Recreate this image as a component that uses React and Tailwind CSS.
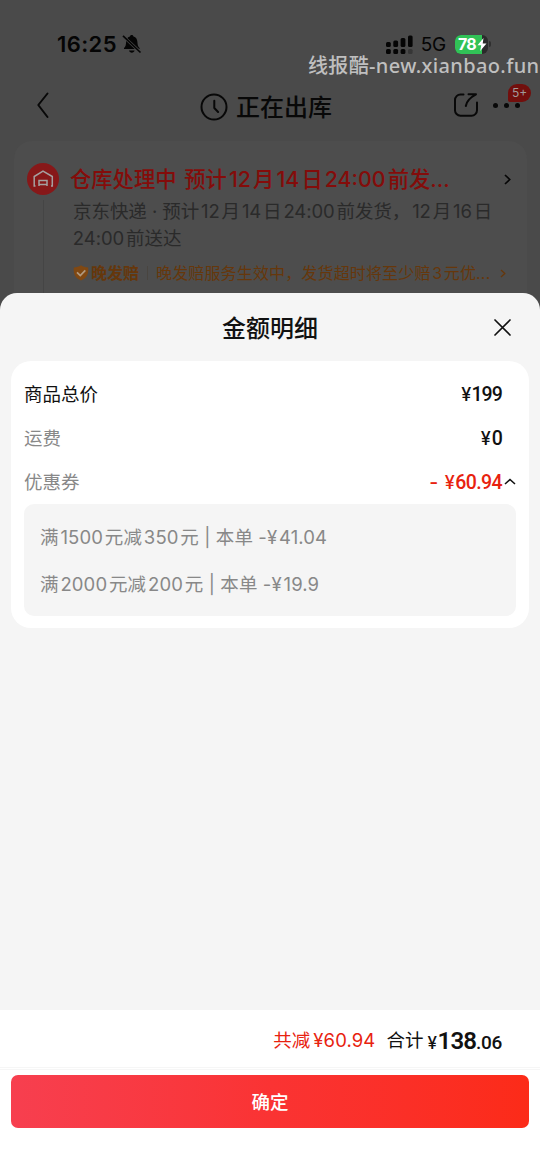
import React from "react";

const coupons = ["满1500元减350元 | 本单 -¥41.04", "满2000元减200元 | 本单 -¥19.9"];

// adds a small gap between chinese characters and numbers
function Mixed({ text }) {
  return text.split(/(\d[\d:.]*)/).map((part, i) =>
    i % 2 ? (
      <span key={i} className="mx-[0.1em]">
        {part}
      </span>
    ) : (
      part
    )
  );
}

function StatusBar() {
  return (
    <div className="flex h-[88px] shrink-0 items-center pl-[57px] pr-[49px] text-[#050505]">
      <span className="text-[22px] font-semibold tracking-[0.4px]">16:25</span>
      <svg className="ml-[5px] h-5 w-5" viewBox="0 0 20 20">
        <path
          d="M9.7 1c1 0 1.700.7 1.800 1.500 2.700.8 3.800 3 3.900 5.500.1 3 .7 4.700 2.200 6v1.100H2V14c1.500-1.300 2-3 2.100-6 .1-2.500 1.200-4.700 3.800-5.500C8 1.700 8.700 1 9.700 1zM7 16.500h5.600c-.4 1.400-1.400 2.200-2.800 2.200S7.400 17.900 7 16.500z"
          fill="currentColor"
        />
        <path d="M1.500 2.500L18.200 18.200" stroke="#4a4a4a" strokeWidth="3" />
        <path d="M1 1.800L18.500 18.500" stroke="currentColor" strokeWidth="1.600" />
      </svg>

      <svg className="ml-auto h-[19px] w-[27px]" viewBox="0 0 27 19" fill="currentColor">
        <rect x="0" y="7" width="4.800" height="5" rx="1.500" />
        <rect x="7.300" y="5.500" width="4.800" height="6.500" rx="1.500" />
        <rect x="14.600" y="3" width="4.800" height="9" rx="1.500" />
        <rect x="22" y="0.500" width="4.600" height="11.500" rx="1.500" />
        <rect x="0" y="14" width="4.800" height="5" rx="1.500" />
        <rect x="7.300" y="14" width="4.800" height="5" rx="1.500" />
        <rect x="14.600" y="14" width="4.800" height="5" rx="1.500" />
        <rect x="22" y="14" width="4.600" height="5" rx="1.500" fill="#363636" />
      </svg>
      <span className="ml-2 text-[19px] leading-none tracking-[-0.2px]">5G</span>
      <div className="relative ml-[9px] flex h-[19px] w-[33px] items-center overflow-hidden rounded-md bg-[#2b2b2b]">
        <div className="absolute inset-y-0 left-0 w-[27px] bg-[#31c257]" />
        <span className="relative ml-[3px] text-[16px] font-bold leading-none tracking-[-0.8px] text-white">78</span>
        <svg className="absolute right-[1px] top-[3px] h-[13px] w-[10px]" viewBox="0 0 10 13">
          <path d="M6.500 0L.5 7.300h3.700L3.200 13 9.500 5.500H5.700z" fill="#fff" />
        </svg>
      </div>
      <div className="ml-[1px] h-1.5 w-[2px] rounded-r bg-[#2f2f2f]" />
    </div>
  );
}

function NavBar() {
  return (
    <div className="relative flex h-[34px] shrink-0 items-center justify-between pl-[35px] pr-[11px] text-[#080808]">
      <svg className="h-7 w-4" viewBox="0 0 16 28" fill="none" stroke="currentColor" strokeWidth="2">
        <path d="M12.500 2.500L3.300 14 12.500 26" strokeLinecap="round" strokeLinejoin="round" />
      </svg>
      <div className="absolute left-[200px] top-0 flex h-[34px] items-center">
        <svg className="mt-[3px] h-7 w-7" viewBox="0 0 28 28" fill="none" stroke="currentColor" strokeWidth="2">
          <circle cx="14" cy="14" r="12.500" />
          <path d="M14.300 7.800v7.200l3.800 4" strokeLinecap="round" strokeLinejoin="round" />
        </svg>
        <span className="ml-2 mt-[5px] text-2xl font-medium">正在出库</span>
      </div>
      <div className="flex items-center">
        <svg className="h-6 w-6" viewBox="0 0 24 24" fill="none" stroke="currentColor" strokeWidth="2">
          <path
            d="M9.500 1.500H6.500a5.500 5.500 0 0 0-5.500 5.500v10A5.500 5.500 0 0 0 6.500 22.700h11a5.500 5.500 0 0 0 5.500-5.500V9.500"
            strokeLinecap="round"
          />
          <path d="M14.500 1.300h7.500C16 4.500 12.500 8 11.800 13" strokeLinecap="round" strokeLinejoin="round" />
        </svg>
        <div className="ml-[15px] flex w-[36px] gap-[6px]">
          <i className="h-[5px] w-[5px] rounded-full bg-[#080808]" />
          <i className="h-[5px] w-[5px] rounded-full bg-[#080808]" />
          <i className="h-[5px] w-[5px] rounded-full bg-[#080808]" />
        </div>
      </div>
      <span className="absolute right-[9px] top-[-4px] flex h-[18px] w-[23px] items-center justify-center rounded-[9px] rounded-bl-[2px] bg-[#720f0d] text-[12px] text-[#a09a9a]">
        5+
      </span>
    </div>
  );
}

function DeliveryCard() {
  return (
    <div className="ml-[14px] mr-[13px] mt-[19px] flex h-[152px] shrink-0 rounded-t-[18px] bg-[#4d4d4d] pl-[13px] pt-[22px]">
      <div className="flex w-8 shrink-0 flex-col items-center">
        <svg className="h-8 w-8 shrink-0" viewBox="0 0 32 32" fill="none">
          <circle cx="16" cy="16" r="16" fill="#871819" />
          <path
            d="M8.500 23H7.200V13.500L16 8.200l9.300 5.300V23H24M12 17.500h8M12 21.500h8M12 16.700V23M20 16.700V23"
            stroke="#a5a0a0"
            strokeWidth="1.500"
          />
        </svg>
        <div className="mt-[5px] w-px flex-1 bg-[#454545]" />
      </div>
      <div className="ml-[11px] flex-1 whitespace-nowrap">
        <div className="mt-px flex h-8 items-center">
          <span className="w-[400px] text-[21.300px] font-medium text-[#840c0a]">
            仓库处理中 <span className="ml-[2px]" />
            <Mixed text="预计12月14日24:00前发..." />
          </span>
          <svg className="ml-[34px] -mt-0.5 h-[11px] w-[7px]" viewBox="0 0 7 11" fill="none" stroke="#060606" strokeWidth="1.700">
            <path d="M1 1l4.700 4.500L1 10" />
          </svg>
        </div>
        <div className="ml-[3px] mt-[2px] text-[18.500px] leading-[27px] tracking-[-0.060px] text-[#2a2a2a]">
          <p>
            <Mixed text="京东快递 · 预计12月14日24:00前发货，12月16日" />
          </p>
          <p className="-ml-[2px]">
            <Mixed text="24:00前送达" />
          </p>
        </div>
        <div className="ml-[3px] mt-[9px] flex h-6 items-center text-[16px] text-[#66370b]">
          <svg className="h-4 w-4" viewBox="0 0 16 16">
            <path
              d="M8 .3c2 1.400 4.300 2 7.200 2.200.6 7-1.700 10.800-7.200 13C2.500 13.300.2 9.500.8 2.500 3.700 2.300 6 1.700 8 .3z"
              fill="#804812"
            />
            <path d="M4 7.300l3.300 3.300L12.300 5.300" fill="none" stroke="#b09a80" strokeWidth="1.700" />
          </svg>
          <span className="ml-[2px] font-bold">晚发赔</span>
          <span className="mx-2 h-3.5 w-px bg-[#494540]" />
          <span className="w-[336px] tracking-[0.150px]">
            <Mixed text="晚发赔服务生效中，发货超时将至少赔3元优..." />
          </span>
          <svg className="ml-2 h-[9px] w-[6px]" viewBox="0 0 6 9" fill="none" stroke="#66370b" strokeWidth="1.300">
            <path d="M1 1l3.800 3.500L1 8" />
          </svg>
        </div>
      </div>
    </div>
  );
}

function PriceRow({ label, labelClass, children }) {
  return (
    <div className="flex h-11 items-center justify-between pl-[13px] pr-[27px]">
      <span className={labelClass}>{label}</span>
      {children}
    </div>
  );
}

function DetailSheet() {
  return (
    <div className="flex flex-1 flex-col rounded-t-[17px] bg-[#f5f5f5]">
      <div className="relative flex h-[68px] items-center justify-center">
        <h2 className="pt-[3px] text-2xl font-medium text-[#111]">金额明细</h2>
        <svg className="absolute right-[29px] top-[26px] h-[17px] w-[17px]" viewBox="0 0 17 17" stroke="#111" strokeWidth="1.700">
          <path d="M1 1l15 15M16 1L1 16" strokeLinecap="round" />
        </svg>
      </div>

      <div className="mx-[11px] h-[267px] rounded-[20px] bg-white pt-[11px] text-[18.500px]">
        <div className="relative top-px">
          <PriceRow label="商品总价" labelClass="text-[#111]">
            <span className="font-[Roboto] text-[19.500px] font-medium tracking-[-0.900px] text-[#111]">
              <span className="mr-[1px] font-[Inter] text-[18px]">¥</span>199
            </span>
          </PriceRow>
          <PriceRow label="运费" labelClass="text-[#888]">
            <span className="font-[Roboto] text-[19.500px] font-medium tracking-[-0.900px] text-[#111]">
              <span className="mr-[2px] font-[Inter] text-[18px]">¥</span>0
            </span>
          </PriceRow>
          <PriceRow label="优惠券" labelClass="text-[#888]">
            <span className="relative font-[Roboto] text-[19.500px] font-medium tracking-[-0.600px] text-[#e8220f]">
              <span className="mr-[3px] font-[Inter]">-</span>{" "}
              <span className="mr-[1px] font-[Inter] text-[18px]">¥</span>60.94
              <svg className="absolute -right-[14px] top-[10px] h-[7px] w-[12px]" viewBox="0 0 12 7" fill="none" stroke="#111" strokeWidth="1.600">
                <path d="M1 6l5-4.500L11 6" />
              </svg>
            </span>
          </PriceRow>
        </div>
        <div className="mx-[13px] h-[112px] rounded-[10px] bg-[#f5f5f5] pl-4 pt-[10px] text-[#888]">
          {coupons.map((text) => (
            <p key={text} className="flex h-[47px] items-center whitespace-pre tracking-[0.100px]">
              <span>
                <Mixed text={text} />
              </span>
            </p>
          ))}
        </div>
      </div>
    </div>
  );
}

function Footer() {
  return (
    <div className="h-[164px] shrink-0 bg-white">
      <div className="flex h-[57px] items-center justify-end pr-[38px] pt-[4px] text-[18.500px]">
        <span className="text-[#e8220f]">
          共减<span className="ml-[3px] tracking-[0.100px]">¥60.94</span>
        </span>
        <span className="ml-[11px] text-[#111]">合计</span>
        <span className="ml-1 font-[Roboto] text-[19px] font-medium leading-none tracking-[-0.300px] text-[#111]">
          <span className="mr-[1px] font-[Inter] text-[17px]">¥</span>
          <span className="text-2xl font-semibold tracking-[-0.900px]">138</span>.06
        </span>
      </div>
      <div className="h-[3px] border-y border-[#f6f6f6]" />
      <button className="mx-[11px] mt-[5px] flex h-[53px] w-[518px] items-center justify-center rounded-[7px] bg-linear-to-r from-[#f73f4f] via-[#fa3333] to-[#fc2b18] pt-[2px] text-[18.500px] font-medium text-white">
        确定
      </button>
    </div>
  );
}

function App() {
  return (
    <div className="relative flex h-[1174px] w-[540px] flex-col overflow-hidden bg-[#4a4a4a] font-[Inter,'Noto_Sans_CJK_SC',sans-serif]">
      <StatusBar />
      <NavBar />
      <DeliveryCard />
      <DetailSheet />
      <Footer />
      <div className="absolute left-[308px] top-[57px] whitespace-nowrap font-['Noto_Sans','Noto_Sans_CJK_SC',sans-serif] text-[20px] font-medium leading-[18px] tracking-[0.350px] text-[#bfbfbf]">
        线报酷-new.xianbao.fun
      </div>
    </div>
  );
}

export default App;
